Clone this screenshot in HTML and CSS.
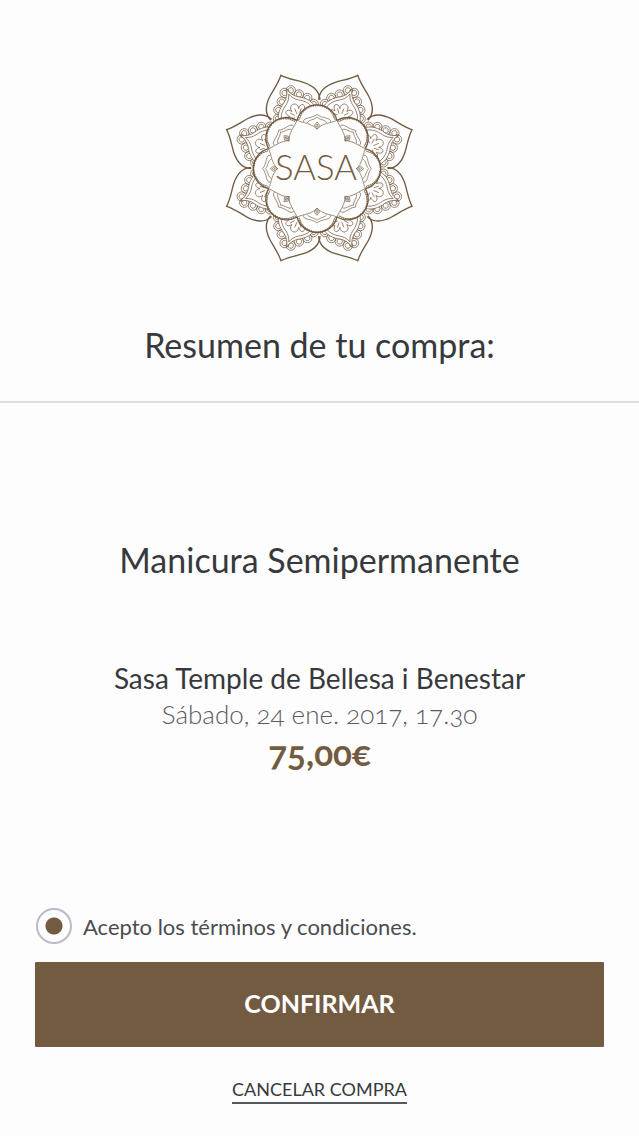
FILE: index.html
```
<!DOCTYPE html>
<html lang="es">
<head>
    <meta charset="UTF-8">
    <meta name="viewport" content="width=device-width, initial-scale=1.0">
    <title>Resumen de tu compra</title>
    <link rel="stylesheet" href="styles.css">
</head>
<body>
    <header class="header">
        <svg class="logo" viewBox="0 0 600 600" role="img" aria-label="SASA">
            <defs>
                <g id="scallop">
                    <circle class="line" r="14"/>
                    <circle class="line" r="8"/>
                </g>
                <!-- outer petal, pointing up from the centre -->
                <g id="petal">
                    <path class="line-thick" d="M-80 -188C-91 -218 -74 -239 -54 -256C-37 -270 -16 -282 0 -301C16 -282 37 -270 54 -256C74 -239 91 -218 80 -188"/>
                    <use href="#scallop" x="-58" y="-184"/>
                    <use href="#scallop" x="58" y="-184"/>
                    <use href="#scallop" x="-47" y="-208"/>
                    <use href="#scallop" x="47" y="-208"/>
                    <use href="#scallop" x="-28" y="-227"/>
                    <use href="#scallop" x="28" y="-227"/>
                    <use href="#scallop" x="-10" y="-248"/>
                    <use href="#scallop" x="10" y="-248"/>
                    <path class="line petal-fill" d="M-60 -165C-60 -194 -40 -212 -24 -221C-12 -229 -4 -240 0 -256C4 -240 12 -229 24 -221C40 -212 60 -194 60 -165"/>
                    <path class="line" d="M-52 -165C-51 -189 -35 -204 -20 -213C-10 -220 -4 -228 0 -240C4 -228 10 -220 20 -213C35 -204 51 -189 52 -165"/>
                    <path class="line" d="M-14 -160C-46 -156 -42 -181 -22 -176C-40 -193 -22 -205 -11 -188C-17 -213 17 -213 11 -188C22 -205 40 -193 22 -176C42 -181 46 -156 14 -160"/>
                    <path class="line" d="M-10 -168L-22 -167M-8 -174L-18 -186M0 -176L0 -193M8 -174L18 -186M10 -168L22 -167"/>
                </g>
                <!-- inner lobe with its beaded edge -->
                <g id="lobe">
                    <path class="petal-fill" d="M-60 -145A62 62 0 0 1 60 -145L0 -100Z"/>
                    <path class="beads" d="M-56 -146A58 58 0 0 1 56 -146"/>
                    <path class="line-thick" d="M-60 -145A62 62 0 0 1 60 -145"/>
                    <path class="line" d="M-53 -147A54 54 0 0 1 53 -147"/>
                    <path class="line" d="M-60 -145C-42 -137 -14 -136 0 -118C14 -136 42 -137 60 -145"/>
                    <path class="line" d="M-40 -140C-44 -154 -14 -150 0 -163C14 -150 44 -154 40 -140"/>
                    <path class="line" d="M-29 -137C-26 -147 -8 -146 0 -155C8 -146 26 -147 29 -137"/>
                    <path class="line" d="M0 -140L8 -130L0 -119L-8 -130ZM0 -134L3 -130L0 -125L-3 -130Z"/>
                </g>
            </defs>
            <g transform="translate(298 300)">
                <use href="#petal" transform="rotate(22.5)"/>
                <use href="#petal" transform="rotate(67.5)"/>
                <use href="#petal" transform="rotate(112.5)"/>
                <use href="#petal" transform="rotate(157.5)"/>
                <use href="#petal" transform="rotate(202.5)"/>
                <use href="#petal" transform="rotate(247.5)"/>
                <use href="#petal" transform="rotate(292.5)"/>
                <use href="#petal" transform="rotate(337.5)"/>
            </g>
            <g transform="translate(291 302)">
                <use href="#lobe"/>
                <use href="#lobe" transform="rotate(45)"/>
                <use href="#lobe" transform="rotate(90)"/>
                <use href="#lobe" transform="rotate(135)"/>
                <use href="#lobe" transform="rotate(180)"/>
                <use href="#lobe" transform="rotate(225)"/>
                <use href="#lobe" transform="rotate(270)"/>
                <use href="#lobe" transform="rotate(315)"/>
            </g>
            <text class="logo-text" x="288" y="335" text-anchor="middle">SASA</text>
        </svg>
        <h1 class="title">Resumen de tu compra:</h1>
    </header>

    <main class="details">
        <h2 class="service">Manicura Semipermanente</h2>
        <p class="place">Sasa Temple de Bellesa i Benestar</p>
        <p class="date">Sábado, 24 ene. 2017, 17.30</p>
        <p class="price">75,00€</p>
    </main>

    <form class="actions">
        <div class="terms">
            <input type="radio" id="terms" name="terms" checked>
            <label for="terms">Acepto los términos y condiciones.</label>
        </div>
        <button type="button" class="btn-confirm">CONFIRMAR</button>
        <a href="#" class="cancel">CANCELAR COMPRA</a>
    </form>
</body>
</html>
```
FILE: styles.css
```
* {
    box-sizing: border-box;
}
body {
    display: flex;
    flex-direction: column;
    min-height: 100vh;
    margin: 0;
    background-color: #fdfdfd;
    color: #37393c;
    font-family: Lato, "Open Sans", sans-serif;
    font-variant-numeric: oldstyle-nums;
    text-align: center;
}
h1, h2, p {
    margin: 0;
    font-weight: normal;
}
.header {
    padding: 68px 20px 36px;
    border-bottom: 2px solid #e0dee2;
}
.logo {
    display: block;
    width: 200px;
    height: 200px;
    margin: 0 auto 57px;
}
.line, .line-thick, .beads {
    fill: none;
    stroke: #735b42;
    stroke-width: 2;
}
.line-thick {
    stroke-width: 4;
}
.beads {
    stroke-width: 4;
    stroke-dasharray: 2 5;
}
.petal-fill {
    fill: #fdfdfd;
}
.logo-text {
    fill: #735b42;
    font-size: 104px;
    font-weight: 300;
}
.title, .service {
    font-size: 34px;
    line-height: 40px;
}
.details {
    flex: 1;
    padding: 137px 20px 40px;
}
.service {
    margin-bottom: 80px;
}
.place, .date {
    font-size: 28px;
    line-height: 36px;
}
.date {
    color: #5a5a5e;
    font-size: 26px;
    font-weight: 300;
}
.price {
    color: #735b42;
    font-size: 35px;
    font-weight: bold;
    line-height: 40px;
}
.actions {
    display: flex;
    flex-direction: column;
    align-items: center;
    padding: 0 35px 32px;
}
.terms {
    display: flex;
    align-items: center;
    align-self: stretch;
    gap: 11px;
    margin-bottom: 18px;
    color: #4b4c50;
    font-size: 22px;
}
.terms input {
    appearance: none;
    width: 36px;
    height: 36px;
    margin: 0 0 0 1px;
    border: 2px solid #bdbac8;
    border-radius: 50%;
    background: radial-gradient(circle, #735b42 8px, #fdfdfd 9px);
}
.btn-confirm {
    width: 100%;
    height: 85px;
    margin-bottom: 30px;
    padding: 0 0 4px;
    border: none;
    border-radius: 1px;
    background-color: #735b42;
    color: #fff;
    font-family: inherit;
    font-size: 25px;
    font-weight: bold;
    cursor: pointer;
}
.cancel {
    border-bottom: 2px solid #55585f;
    color: #37393c;
    font-size: 18px;
    line-height: 25px;
    text-decoration: none;
}
```
